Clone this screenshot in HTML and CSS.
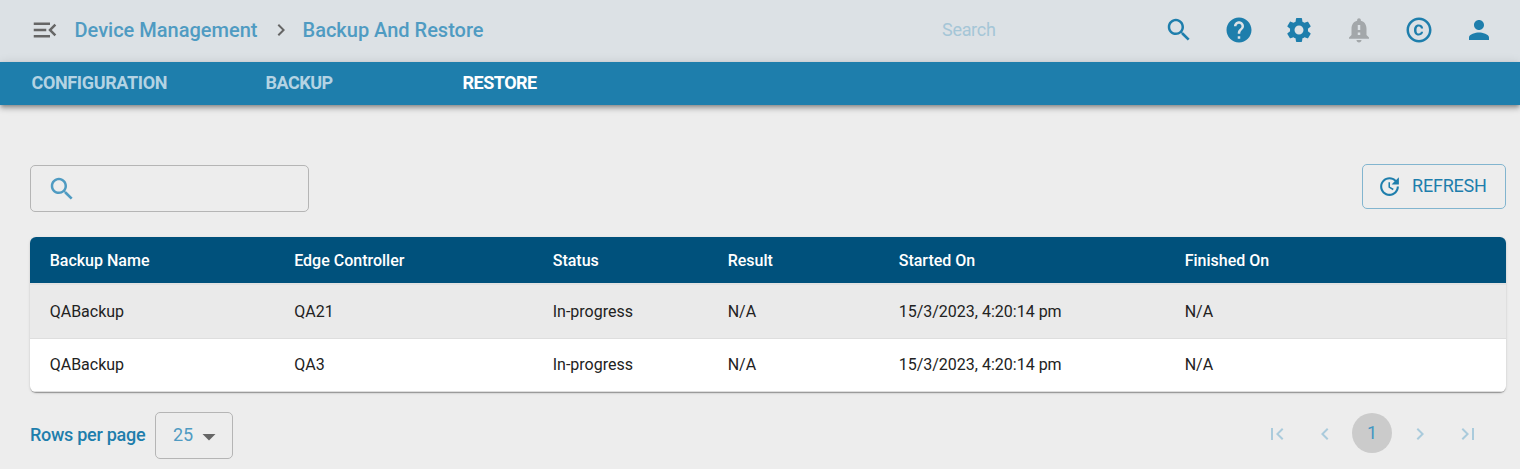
FILE: index.html
```html
<!DOCTYPE html>
<html lang="en">
<head>
<meta charset="utf-8">
<title>Backup And Restore</title>
<link rel="stylesheet" href="styles.css">
</head>
<body>
<header class="topbar">
  <svg class="icon icon-lg menu" viewBox="0 0 24 24"><path d="M3 18h13v-2H3v2zm0-5h10v-2H3v2zm0-7v2h13V6H3zm18 9.59L17.42 12 21 8.41 19.59 7l-5 5 5 5L21 15.59z"/></svg>
  <nav class="crumbs">
    <a class="crumb crumb-parent">Device Management</a>
    <svg class="icon separator" viewBox="0 0 24 24"><path d="M10 6 8.59 7.41 13.17 12l-4.58 4.59L10 18l6-6z"/></svg>
    <a class="crumb crumb-current">Backup And Restore</a>
  </nav>
  <div class="search-label">Search</div>
  <div class="actions">
    <svg class="icon icon-lg" viewBox="0 0 24 24"><path d="M15.5 14h-.79l-.28-.27C15.41 12.59 16 11.11 16 9.5 16 5.91 13.09 3 9.5 3S3 5.91 3 9.5 5.91 16 9.5 16c1.61 0 3.09-.59 4.23-1.57l.27.28v.79l5 4.99L20.49 19l-4.99-5zm-6 0C7.01 14 5 11.99 5 9.5S7.01 5 9.5 5 14 7.01 14 9.5 11.99 14 9.5 14z"/></svg>
    <svg class="icon icon-lg" viewBox="0 0 24 24"><path d="M12 2C6.48 2 2 6.48 2 12s4.48 10 10 10 10-4.48 10-10S17.52 2 12 2zm1 17h-2v-2h2v2zm2.07-7.75-.9.92C13.45 12.9 13 13.5 13 15h-2v-.5c0-1.1.45-2.1 1.17-2.83l1.24-1.26c.37-.36.59-.86.59-1.41 0-1.1-.9-2-2-2s-2 .9-2 2H8c0-2.21 1.79-4 4-4s4 1.79 4 4c0 .88-.36 1.68-.93 2.25z"/></svg>
    <svg class="icon icon-lg" viewBox="0 0 24 24"><path d="M19.14 12.94c.04-.3.06-.61.06-.94 0-.32-.02-.64-.07-.94l2.03-1.58c.18-.14.23-.41.12-.61l-1.92-3.32c-.12-.22-.37-.29-.59-.22l-2.39.96c-.5-.38-1.03-.7-1.62-.94l-.36-2.54c-.04-.24-.24-.41-.48-.41h-3.84c-.24 0-.43.17-.47.41l-.36 2.54c-.59.24-1.13.57-1.62.94l-2.39-.96c-.22-.08-.47 0-.59.22L2.74 8.87c-.12.21-.08.47.12.61l2.03 1.58c-.05.3-.09.63-.09.94s.02.64.07.94l-2.03 1.58c-.18.14-.23.41-.12.61l1.92 3.32c.12.22.37.29.59.22l2.39-.96c.5.38 1.03.7 1.62.94l.36 2.54c.05.24.24.41.48.41h3.84c.24 0 .44-.17.47-.41l.36-2.54c.59-.24 1.13-.56 1.62-.94l2.39.96c.22.08.47 0 .59-.22l1.92-3.32c.12-.22.07-.47-.12-.61l-2.01-1.58zM12 15.6c-1.98 0-3.6-1.62-3.6-3.6s1.62-3.6 3.6-3.6 3.6 1.62 3.6 3.6-1.62 3.6-3.6 3.6z"/></svg>
    <svg class="icon icon-lg muted" viewBox="0 0 24 24"><path d="M18 16v-5c0-3.07-1.64-5.64-4.5-6.32V4c0-.83-.67-1.5-1.5-1.5s-1.5.67-1.5 1.5v.68C7.63 5.36 6 7.92 6 11v5l-2 2v1h16v-1l-2-2zm-5 0h-2v-2h2v2zm0-4h-2V8h2v4zm-1 10c1.1 0 2-.9 2-2h-4c0 1.1.89 2 2 2z"/></svg>
    <svg class="icon icon-lg" viewBox="0 0 24 24"><path d="M11.88 9.14c1.28.06 1.61 1.15 1.63 1.66h1.79c-.08-1.98-1.49-3.19-3.45-3.19C9.64 7.61 8 9 8 12.14c0 1.94.93 4.24 3.84 4.24 2.22 0 3.41-1.65 3.44-2.95h-1.79c-.03.59-.45 1.38-1.63 1.44-1.31-.04-1.86-1.06-1.86-2.73 0-2.89 1.28-2.98 1.88-3zM12 2C6.48 2 2 6.48 2 12s4.48 10 10 10 10-4.48 10-10S17.52 2 12 2zm0 18c-4.41 0-8-3.59-8-8s3.59-8 8-8 8 3.59 8 8-3.59 8-8 8z"/></svg>
    <svg class="icon icon-lg" viewBox="0 0 24 24"><path d="M12 12c2.21 0 4-1.79 4-4s-1.79-4-4-4-4 1.79-4 4 1.79 4 4 4zm0 2c-2.67 0-8 1.34-8 4v2h16v-2c0-2.66-5.33-4-8-4z"/></svg>
  </div>
</header>
<nav class="tabs">
  <a class="tab tab-wide">CONFIGURATION</a>
  <a class="tab">BACKUP</a>
  <a class="tab tab-active">RESTORE</a>
</nav>
<main class="content">
  <div class="toolbar">
    <div class="filter">
      <svg class="icon icon-lg" viewBox="0 0 24 24"><path d="M15.5 14h-.79l-.28-.27C15.41 12.59 16 11.11 16 9.5 16 5.91 13.09 3 9.5 3S3 5.91 3 9.5 5.91 16 9.5 16c1.61 0 3.09-.59 4.23-1.57l.27.28v.79l5 4.99L20.49 19l-4.99-5zm-6 0C7.01 14 5 11.99 5 9.5S7.01 5 9.5 5 14 7.01 14 9.5 11.99 14 9.5 14z"/></svg>
    </div>
    <button class="refresh">
      <svg class="icon refresh-icon" viewBox="0 0 24 24"><path d="M11 8v5l4.25 2.52.77-1.28-3.52-2.09V8zm10 2V3l-2.64 2.64C16.74 4.01 14.49 3 12 3c-4.97 0-9 4.03-9 9s4.03 9 9 9 9-4.03 9-9h-2c0 3.86-3.14 7-7 7s-7-3.14-7-7 3.14-7 7-7c1.93 0 3.68.79 4.95 2.05L14 10h7z"/></svg>
      <span class="refresh-label">REFRESH</span>
    </button>
  </div>
  <section class="grid">
    <div class="row head"><div>Backup Name</div><div>Edge Controller</div><div>Status</div><div>Result</div><div>Started On</div><div>Finished On</div></div>
    <div class="row shaded"><div>QABackup</div><div>QA21</div><div>In-progress</div><div>N/A</div><div>15/3/2023, 4:20:14 pm</div><div>N/A</div></div>
    <div class="row"><div>QABackup</div><div>QA3</div><div>In-progress</div><div>N/A</div><div>15/3/2023, 4:20:14 pm</div><div>N/A</div></div>
  </section>
  <footer class="pager">
    <span class="pager-label">Rows per page</span>
    <div class="select"><span class="select-value">25</span><svg class="icon" viewBox="0 0 24 24"><path d="m5.5 10 6.5 6.5 6.5-6.5z"/></svg></div>
    <div class="pages">
      <svg class="icon" viewBox="0 0 24 24"><path d="M18.41 16.59 13.82 12l4.59-4.59L17 6l-6 6 6 6zM6 6h2v12H6z"/></svg>
      <svg class="icon" viewBox="0 0 24 24"><path d="M15.41 7.41 14 6l-6 6 6 6 1.41-1.41L10.83 12z"/></svg>
      <span class="page">1</span>
      <svg class="icon" viewBox="0 0 24 24"><path d="M10 6 8.59 7.41 13.17 12l-4.58 4.59L10 18l6-6z"/></svg>
      <svg class="icon" viewBox="0 0 24 24"><path d="M5.59 7.41 10.18 12l-4.59 4.59L7 18l6-6-6-6zM16 6h2v12h-2z"/></svg>
    </div>
  </footer>
</main>
</body>
</html>
```
FILE: styles.css
```css
* { box-sizing: border-box; }
body {
  margin: 0;
  height: 469px;
  overflow: hidden;
  background: #ededed;
  font-family: Roboto, "Liberation Sans", sans-serif;
  color: #1e7eac;
}
.icon { display: block; flex: none; width: 24px; height: 24px; fill: currentColor; }
.icon-lg { width: 30px; height: 30px; }

.topbar {
  display: flex;
  align-items: center;
  height: 62px;
  padding: 0 26px 2px 30px;
  background: #dce1e5;
}
.menu, .separator { color: #666; }
.crumbs { display: flex; align-items: center; width: 882px; padding-left: 14.5px; }
.crumb { font-size: 20px; font-weight: 500; line-height: 24px; color: #4f9bc2; white-space: nowrap; }
.crumb-parent { width: 194px; }
.crumb-current { margin-left: 10px; }
.search-label { font-size: 18px; line-height: 24px; color: #a5c6d7; letter-spacing: -0.3px; }
.actions { display: flex; gap: 30px; margin-left: auto; }
.muted { color: #a3a7aa; }

.tabs {
  display: flex;
  height: 43px;
  padding-left: 31.5px;
  background: #1e7eac;
  box-shadow: 0 2px 4px -1px rgba(0,0,0,.3), 0 4px 5px rgba(0,0,0,.17), 0 1px 10px rgba(0,0,0,.12);
}
.tab { width: 197px; font-size: 18px; font-weight: 700; line-height: 42px; letter-spacing: -0.5px; color: #b4d3e3; }
.tab-wide { width: 234px; letter-spacing: -0.36px; }
.tab-active { color: #fff; }

.content { padding: 59px 14px 0 30px; }
.toolbar { display: flex; justify-content: space-between; height: 48px; }
.filter {
  display: flex;
  align-items: center;
  width: 279px;
  height: 47px;
  margin-top: 1px;
  padding-left: 16px;
  border: 1px solid #b5b5b5;
  border-radius: 5px;
  color: #4f9bc2;
}
.refresh {
  display: flex;
  align-items: center;
  width: 144px;
  height: 45px;
  padding: 0 0 0 14px;
  border: 1px solid #82b5cf;
  border-radius: 5px;
  background: none;
  color: #1e7eac;
  font: 400 18px/24px Roboto, sans-serif;
  letter-spacing: -0.2px;
}
.refresh-icon { width: 25px; height: 25px; margin-right: 10px; }
.refresh-label { padding-bottom: 2px; }

.grid {
  margin-top: 25px;
  border-radius: 6px;
  overflow: hidden;
  background: #fff;
  box-shadow: 0 2px 1px -1px rgba(0,0,0,.2), 0 1px 1px rgba(0,0,0,.14), 0 1px 3px rgba(0,0,0,.12);
}
.row {
  display: grid;
  grid-template-columns: 244.5px 258.5px 175px 171px 286px 1fr;
  height: 53px;
  padding-left: 19.7px;
  border-bottom: 1px solid #dedede;
  color: #222;
  font-size: 16px;
  line-height: 52px;
}
.head { height: 46px; border: 0; background: #00517c; color: #fff; font-weight: 500; line-height: 47px; }
.shaded { height: 56px; border-top: 2px solid #e2e2e2; background: #eaeaea; line-height: 54px; }

.pager { display: flex; align-items: center; height: 47px; margin-top: 20px; }
.pager-label { width: 125px; padding-bottom: 2px; font-size: 18px; font-weight: 500; white-space: nowrap; letter-spacing: -0.28px; }
.select {
  display: flex;
  align-items: center;
  width: 78px;
  height: 47px;
  padding-left: 17px;
  border: 1px solid #b5b5b5;
  border-radius: 5px;
  color: #4f9bc2;
  font-size: 18px;
}
.select-value { padding-bottom: 2px; }
.select .icon { margin-left: 4px; color: #666; }
.pages { display: flex; align-items: center; gap: 24px; margin: 0 26.5px 5px auto; color: #aacbdc; }
.pages .icon { margin-top: 1px; }
.page {
  width: 40px;
  height: 40px;
  margin: 0 -8.5px;
  border-radius: 50%;
  background: #cbcbcb;
  color: #4396c2;
  font-size: 18px;
  line-height: 40px;
  text-align: center;
}
```
